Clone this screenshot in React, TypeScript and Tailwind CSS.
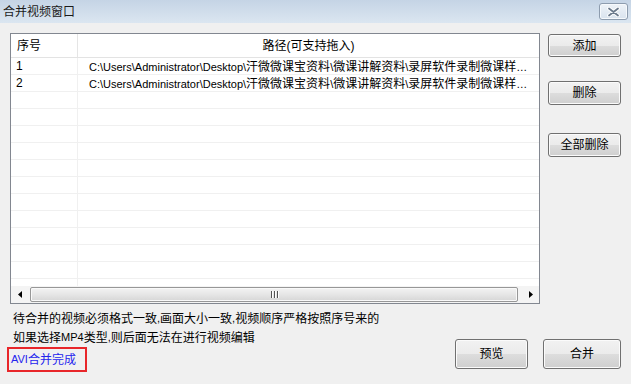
import React from "react";

const FONT = "'Liberation Sans', 'Noto Sans CJK SC', sans-serif";

function Mixed({ text }: { text: string }) {
  const parts = text.split(/([\x00-\x7f]+)/).filter((p) => p.length > 0);
  return (
    <>
      {parts.map((p, i) =>
        /^[\x00-\x7f]+$/.test(p) ? (
          <span key={i} className="text-[11px]">
            {p}
          </span>
        ) : (
          <span key={i} className="text-[12px]">
            {p}
          </span>
        )
      )}
    </>
  );
}

function WinButton({ label, className }: { label: string; className: string }) {
  return (
    <div
      className={
        "flex items-center justify-center rounded-[3px] border border-[#707070] bg-[linear-gradient(#f2f2f2,#ebebeb_50%,#dddddd_50%,#cfcfcf)] shadow-[inset_0_0_0_1px_#fbfbfb] text-[12px] text-black leading-none " +
        className
      }
    >
      {label}
    </div>
  );
}

const PATH =
  "C:\\Users\\Administrator\\Desktop\\汗微微课宝资料\\微课讲解资料\\录屏软件录制微课样";

export default function App() {
  const rows = Array.from({ length: 14 }, (_, i) => i);
  return (
    <div
      className="w-[631px] h-[384px] bg-[#f0f0f0] overflow-hidden flex flex-col text-black"
      style={{ fontFamily: FONT }}
    >
      {/* Title bar */}
      <div className="h-[23px] flex items-center justify-between pl-[3px] pr-[3px] bg-[linear-gradient(#c5d4e5,#dbe6f1)]">
        <span className="text-[12px] leading-none text-[#1a1a1a]">合并视频窗口</span>
        <div className="w-[29px] h-[17px] rounded-[3px] border border-[#8d9cae] bg-[linear-gradient(#eef3f8,#d9e3ee)] shadow-[inset_0_0_0_1px_#f6f9fc] flex items-center justify-center">
          <svg width="13" height="10" viewBox="0 0 13 10">
            <path d="M2 1.5 L11 8.5 M11 1.5 L2 8.5" stroke="#ffffff" strokeWidth="3.6" strokeLinecap="round" />
            <path d="M2 1.5 L11 8.5 M11 1.5 L2 8.5" stroke="#6b7a8c" strokeWidth="1.8" strokeLinecap="round" />
          </svg>
        </div>
      </div>

      {/* Top section */}
      <div className="flex mt-[10px] pl-[10px]">
        {/* Table */}
        <div className="w-[530px] h-[271px] border border-[#828790] bg-white flex flex-col overflow-hidden">
          <div className="h-[24px] flex border-b border-[#e3e3e3] shrink-0">
            <div className="w-[67px] border-r border-[#e5e5e5] flex items-center pl-[6px] text-[12px] leading-none">
              序号
            </div>
            <div className="flex-1 flex items-center justify-center text-[12px] leading-none">
              路径(可支持拖入)
            </div>
          </div>
          <div className="flex-1 overflow-hidden">
            {rows.map((i) => (
              <div key={i} className="h-[17px] flex border-b border-[#f0f0f0]">
                <div className="w-[67px] border-r border-[#f0f0f0] pl-[5px] flex items-center text-[12px] leading-none">
                  {i < 2 ? String(i + 1) : ""}
                </div>
                <div className="flex-1 min-w-0 pl-[11px] flex items-center">
                  {i < 2 ? (
                    <div className="whitespace-nowrap leading-[16px]">
                      <Mixed text={PATH} />
                      <span className="text-[11px]">…</span>
                    </div>
                  ) : null}
                </div>
              </div>
            ))}
          </div>
          {/* Horizontal scrollbar */}
          <div className="h-[17px] shrink-0 flex items-center bg-[#f4f4f4]">
            <div className="w-[17px] h-full flex items-center justify-center">
              <svg width="4" height="7" viewBox="0 0 4 7">
                <path d="M4 0 L0 3.5 L4 7 Z" fill="#000" />
              </svg>
            </div>
            <div className="ml-[2px] w-[488px] h-[15px] rounded-[2px] border border-[#979797] bg-[linear-gradient(#f3f3f3,#e6e6e6_50%,#d6d6d6)] shadow-[inset_0_0_0_1px_#f9f9f9] flex items-center justify-center gap-[2px]">
              <div className="w-[1px] h-[7px] bg-[#555] shadow-[1px_0_0_#fff]" />
              <div className="w-[1px] h-[7px] bg-[#555] shadow-[1px_0_0_#fff]" />
              <div className="w-[1px] h-[7px] bg-[#555] shadow-[1px_0_0_#fff]" />
            </div>
            <div className="flex-1" />
            <div className="w-[17px] h-full flex items-center justify-center">
              <svg width="4" height="7" viewBox="0 0 4 7">
                <path d="M0 0 L4 3.5 L0 7 Z" fill="#000" />
              </svg>
            </div>
          </div>
        </div>

        {/* Right buttons */}
        <div className="ml-[8px] w-[73px] flex flex-col">
          <WinButton label="添加" className="mt-[1px] h-[23px]" />
          <WinButton label="删除" className="mt-[24px] h-[24px]" />
          <WinButton label="全部删除" className="mt-[28px] h-[24px]" />
        </div>
      </div>

      {/* Bottom section */}
      <div className="flex">
        <div className="flex-1 pl-[7px] flex flex-col">
          <div className="pl-[6px] mt-[5px] h-[19px] flex items-center whitespace-nowrap">
            <Mixed text="待合并的视频必须格式一致,画面大小一致,视频顺序严格按照序号来的" />
          </div>
          <div className="pl-[6px] h-[19px] flex items-center whitespace-nowrap">
            <Mixed text="如果选择MP4类型,则后面无法在进行视频编辑" />
          </div>
          <div className="w-[80px] h-[25px] border-2 border-[#e8262a] pl-[2px] flex items-center text-[#2424ee] whitespace-nowrap">
            <Mixed text="AVI合并完成" />
          </div>
        </div>
        <div className="flex items-start pt-[35px] pr-[10px]">
          <WinButton label="预览" className="w-[73px] h-[30px]" />
          <WinButton label="合并" className="ml-[15px] w-[78px] h-[30px]" />
        </div>
      </div>
    </div>
  );
}
